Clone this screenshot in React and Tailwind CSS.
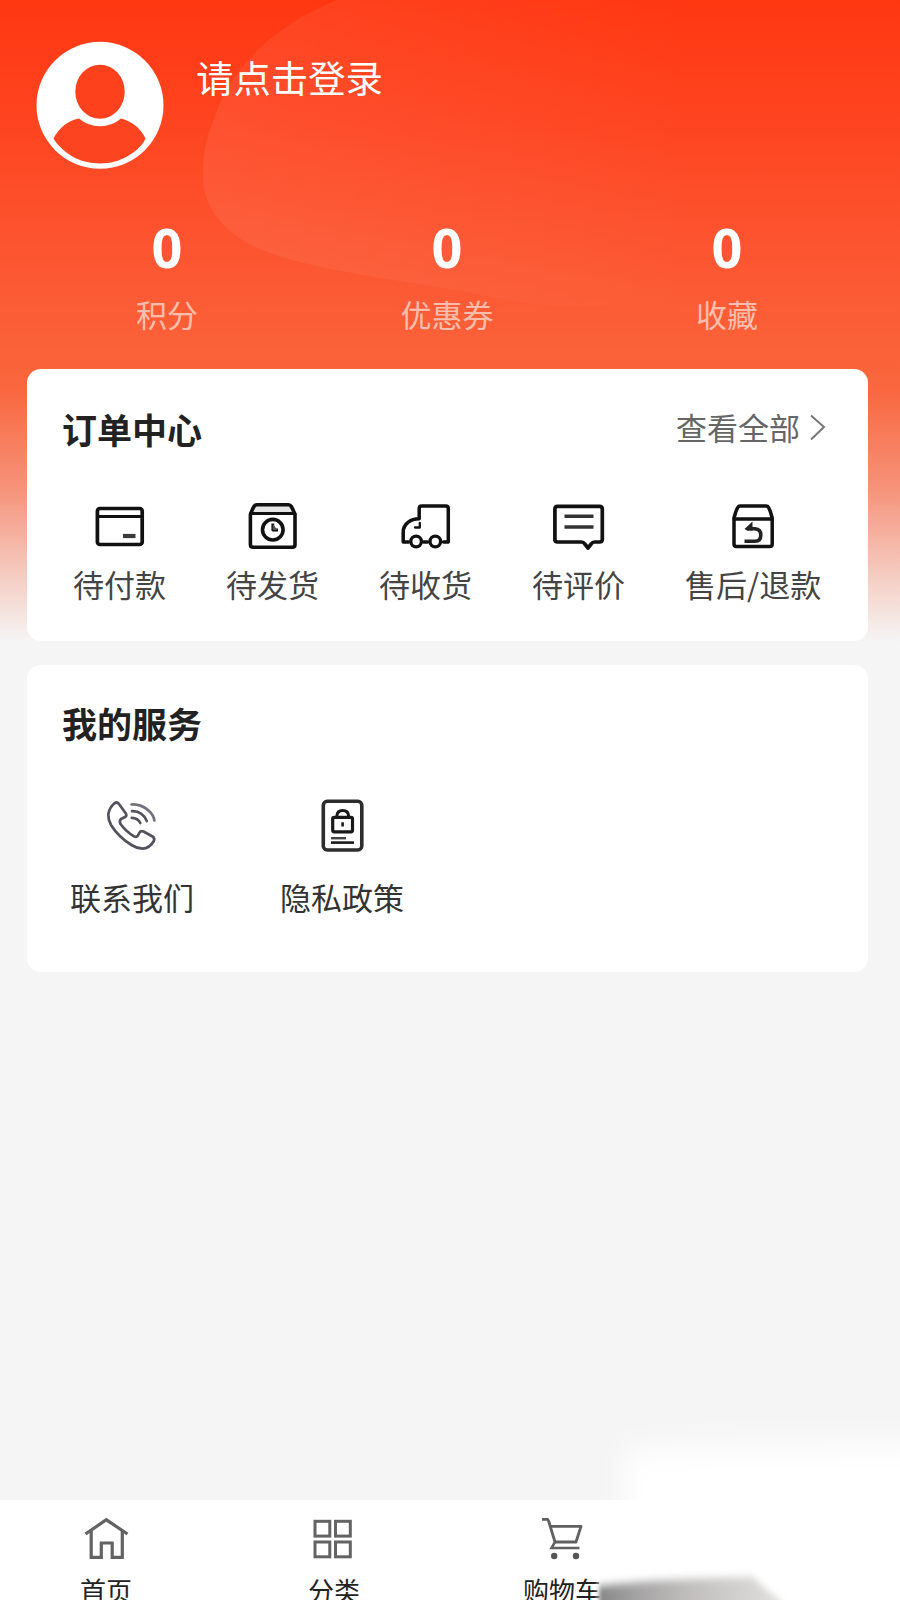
const line = { fill: 'none', stroke: 'currentColor', strokeLinejoin: 'round', strokeLinecap: 'round' };

const Avatar = () => (
  <svg className="block h-[128px] w-[128px] shrink-0" viewBox="36 41 128 128">
    <circle cx="100" cy="105.300" r="63.5" fill="#fff" />
    <ellipse cx="100" cy="91.7" rx="24.7" ry="27" fill="#fe411d" />
    <path d="M53.500 138.500Q62 122 79 118.500Q88 126.300 100 126.300Q112 126.300 121 118.500Q138 123 145.500 138.500Q143 145 134 152Q119 163.500 100 163.500Q81 163.500 67 153Q57 145 53.500 138.500Z" fill="#fd4420" />
  </svg>
);

const Card = () => (
  <svg className="block h-[60px] w-[60px]" viewBox="89.5 496 60 60">
    <g {...line} strokeWidth="3.700">
      <rect x="96.900" y="508.500" width="44.800" height="36" rx="2.500" />
      <path d="M97 516.500H141.500" strokeLinecap="butt" strokeWidth="3.200" />
      <path d="M122.500 536H135" stroke="#3a3a3a" strokeLinecap="butt" strokeWidth="4.200" />
    </g>
  </svg>
);

const ClockBox = () => (
  <svg className="block h-[60px] w-[60px]" viewBox="242.5 496 60 60">
    <path d="M253 505H291L294 512H250Z" fill="#e5e5e5" />
    <g {...line} strokeWidth="3.600">
      <path d="M249.900 514.500V544.500Q249.900 547.300 252.700 547.300H291.700Q294.500 547.300 294.500 544.500V514.500Q292.500 509.500 290.800 506.500Q289.800 504.800 288 504.800H256.500Q254.700 504.800 253.500 506.500Q251.500 510 249.900 514.500Z" />
      <path d="M250 513.500H294.500" strokeWidth="3" />
      <circle cx="272.300" cy="529.700" r="10.300" />
      <path d="M272.300 523.500V530H277.500" strokeWidth="2.800" strokeLinecap="butt" />
    </g>
    <path d="M272.300 524L277 530H272.300Z" fill="#555" />
  </svg>
);

const Truck = () => (
  <svg className="block h-[60px] w-[60px]" viewBox="395.5 496 60 60">
    <g {...line} strokeWidth="3.500">
      <path d="M408 542H402.700V532Q402.700 526 408 522Q412 518.700 418.700 518.700V508.500Q418.700 506 421.200 506H445.300Q447.800 506 447.800 508.500V542H443" />
      <path d="M423 542H427" />
      <path d="M419.300 523V527.500H414.500" strokeWidth="2.300" />
      <circle cx="415.600" cy="541.500" r="5.300" strokeWidth="3.300" />
      <circle cx="434.800" cy="541.500" r="5.300" strokeWidth="3.300" />
    </g>
  </svg>
);

const Comment = () => (
  <svg className="block h-[60px] w-[60px]" viewBox="548.5 496 60 60">
    <g {...line} strokeWidth="3.700">
      <path d="M557 506.300H599Q601.800 506.300 601.800 509V539.300Q601.800 542 599 542H594Q592 542 590.700 544L587.500 548L584.300 544Q583 542 581 542H557Q554.400 542 554.400 539.300V509Q554.400 506.300 557 506.300Z" />
      <path d="M564 516.300H593M564 527H593" stroke="#333" strokeWidth="3.500" strokeLinecap="butt" />
    </g>
  </svg>
);

const RefundBox = () => (
  <svg className="block h-[60px] w-[60px]" viewBox="723 496 60 60">
    <g {...line} strokeWidth="3.500">
      <path d="M734 518V544Q734 546.600 736.600 546.600H769.600Q772.200 546.600 772.200 544V518Q770.500 511 768.600 507.500Q767.800 506 766 506H740.200Q738.500 506 737.700 507.500Q735.700 511 734 518Z" />
      <path d="M734 519H772" strokeWidth="3.300" />
      <path d="M747 528.800H755Q760.800 529.200 760.800 535Q760.800 541.300 755 541.300H744.500" stroke="#222" strokeWidth="3.600" strokeLinecap="butt" />
    </g>
    <path d="M744.500 529L752.500 521.500V530.500H747Z" fill="#222" />
  </svg>
);

const Phone = () => (
  <svg className="block h-[60px] w-[60px]" viewBox="102 796 60 60" color="#55525f">
    <g {...line} strokeWidth="2.700">
      <path d="M114.500 803.300Q117 801.500 118.800 803.800L125.700 813.300Q127.300 815.600 125 817L121 819Q119 821 120.500 824Q126.500 832 134 836.300Q136.500 837.700 138 835.500L139.300 832.800Q140.700 830.300 143.500 831.500L152.500 836.500Q155.300 838.300 153.700 841.300Q149.500 848.500 142.500 848.700Q137 848.500 131.500 845Q118.500 837 111 825Q108 819.500 108.300 814Q109.500 807.500 114.500 803.300Z" />
      <path d="M131.800 817.800Q138 818 140.300 823" />
      <path d="M132 811.200Q142 810.700 146.800 821" />
      <path d="M131.500 804.500Q141 804 148.500 810.500Q154 815.500 154.300 820.500" stroke="#72707a" />
    </g>
  </svg>
);

const Privacy = () => (
  <svg className="block h-[60px] w-[60px]" viewBox="312 796 60 60" color="#191919">
    <g {...line} strokeWidth="3.600">
      <rect x="323.300" y="801.300" width="38.500" height="48.700" rx="4" stroke="#2d2d2d" />
      <rect x="332.700" y="817.300" width="19.800" height="14.500" rx="1.500" strokeWidth="3.200" />
      <path d="M336.800 816.500Q337 810.500 342.700 810.500Q348.500 810.500 348.700 816.500" strokeWidth="3" />
      <path d="M342.600 822.300V826.500" strokeWidth="2.600" strokeLinecap="butt" />
      <path d="M331 838.200H346" strokeWidth="2.400" strokeLinecap="butt" stroke="#444" />
      <path d="M331 842.600H354" strokeWidth="2.600" strokeLinecap="butt" />
    </g>
  </svg>
);

const Home = () => (
  <svg className="block h-[48px] w-[48px] shrink-0" viewBox="82 1515 48 48" fill="none" stroke="#636363" strokeWidth="3.200">
    <path d="M85.500 1534L106.300 1519.800L127.500 1534" />
    <path d="M91.200 1531V1557.300H101.300V1543H112.200V1557.300H122.300V1531" />
  </svg>
);

const Grid = () => (
  <svg className="block h-[48px] w-[48px] shrink-0" viewBox="310 1515 48 48" fill="none" stroke="#636363" strokeWidth="3">
    <rect x="315" y="1521.300" width="14.800" height="14.800" />
    <rect x="335.500" y="1521.300" width="14.800" height="14.800" />
    <rect x="315" y="1542" width="14.800" height="14.800" />
    <rect x="335.500" y="1542" width="14.800" height="14.800" />
  </svg>
);

const Cart = () => (
  <svg className="block h-[48px] w-[48px] shrink-0" viewBox="538 1515 48 48" fill="none" stroke="#606060" strokeWidth="2.800">
    <path d="M542 1519.300H547.500Q549 1521 549.500 1524L555 1542H576L581 1526.300H550.500" strokeLinejoin="round" />
    <path d="M555 1542L551.500 1548H579.500" strokeWidth="2.500" />
    <circle cx="554.200" cy="1556" r="3.200" fill="#555" stroke="none" />
    <circle cx="576" cy="1556" r="3.200" fill="#555" stroke="none" />
  </svg>
);

const stats = ['积分', '优惠券', '收藏'];

const orders = [
  { label: '待付款', Icon: Card },
  { label: '待发货', Icon: ClockBox },
  { label: '待收货', Icon: Truck },
  { label: '待评价', Icon: Comment },
  { label: '售后/退款', Icon: RefundBox },
];

const services = [
  { label: '联系我们', Icon: Phone },
  { label: '隐私政策', Icon: Privacy },
];

const tabs = [
  { label: '首页', Icon: Home },
  { label: '分类', Icon: Grid },
  { label: '购物车', Icon: Cart },
];

const HeaderArt = () => (
  <svg className="absolute left-0 top-0 h-[400px] w-[900px]" viewBox="0 0 900 400">
    <defs>
      <linearGradient id="swirl" x1="0" y1="0" x2="1" y2="0">
        <stop offset="0" stopColor="#fff" stopOpacity="0.07" />
        <stop offset="0.35" stopColor="#fff" stopOpacity="0.035" />
        <stop offset="0.7" stopColor="#fff" stopOpacity="0" />
      </linearGradient>
    </defs>
    <path d="M337 0C300 15 272 35 253 55C236 73 224 92 217 110C208 133 203 150 203 172C203 190 206 202 217 217C228 232 246 244 270 253C318 270 390 279 450 289C490 296 525 306 570 306H900V0Z" fill="url(#swirl)" />
  </svg>
);

const CornerHaze = () => (
  <svg className="pointer-events-none absolute bottom-0 right-0 h-[220px] w-[340px]" viewBox="560 1380 340 220">
    <defs>
      <filter id="soft" x="-30%" y="-60%" width="160%" height="220%">
        <feGaussianBlur stdDeviation="13 15" />
      </filter>
      <filter id="edge" x="-10%" y="-50%" width="120%" height="200%">
        <feGaussianBlur stdDeviation="2 4.500" />
      </filter>
      <linearGradient id="veil" x1="594" y1="0" x2="606" y2="0" gradientUnits="userSpaceOnUse">
        <stop offset="0" stopColor="#fff" stopOpacity="0" />
        <stop offset="1" stopColor="#fff" />
      </linearGradient>
      <linearGradient id="shade" x1="597" y1="0" x2="780" y2="0" gradientUnits="userSpaceOnUse">
        <stop offset="0" stopColor="#858585" />
        <stop offset="0.2" stopColor="#a3a2a2" />
        <stop offset="0.5" stopColor="#c0bebd" />
        <stop offset="1" stopColor="#e0dfde" />
      </linearGradient>
    </defs>
    <path d="M624 1450L700 1446L960 1443V1660H624Z" fill="#fff" filter="url(#soft)" />
    <rect x="594" y="1500" width="306" height="100" fill="url(#veil)" />
    <path d="M599 1586Q640 1581 690 1579L752 1577L784 1604V1625H599Z" fill="url(#shade)" filter="url(#edge)" />
  </svg>
);

export default function App() {
  return (
    <div className="relative flex h-[1600px] w-[900px] flex-col overflow-hidden bg-[#f5f5f5] bg-[linear-gradient(180deg,#ff3711_0px,#fe4521_130px,#fc5530_250px,#fa643b_370px,#f96941_395px,#f6937b_490px,#f5c9bd_570px,#f5f5f5_642px)] font-['Noto_Sans_CJK_SC',sans-serif]">
      <HeaderArt />
      <header className="relative h-[369px] px-[27px] pt-[41px]">
        <div className="flex h-[128px] pl-[9px]">
          <Avatar />
          <div className="ml-[32px] mt-[9px] h-[54px] text-[37.400px] leading-[54px] text-white">请点击登录</div>
        </div>
        <div className="mt-[48px] flex w-[840px]">
          {stats.map((label) => (
            <div key={label} className="flex w-[280px] flex-col items-center">
              <div className="font-['Open_Sans',sans-serif] text-[54px] font-bold leading-[60px] text-white">0</div>
              <div className="mt-[14px] text-[31px] leading-[46px] text-white/60">{label}</div>
            </div>
          ))}
        </div>
      </header>

      <section className="relative ml-[27px] h-[272px] w-[841px] rounded-[14px] bg-white">
        <div className="flex h-[86px] items-start justify-between pl-[35px] pr-[42px] pt-[35px]">
          <h2 className="text-[35px] font-bold leading-[50px] text-[#222]">订单中心</h2>
          <div className="-mt-[2px] flex items-center text-[31px] leading-[50px] text-[#666]">
            查看全部
            <svg className="ml-[10px] block h-[27px] w-[16px]" viewBox="0 0 16 27" fill="none" stroke="#777" strokeWidth="2">
              <path d="M1 1.500L14 13L1 25.500" />
            </svg>
          </div>
        </div>
        <div className="ml-[46px] mt-[41px] flex gap-[60px]">
          {orders.map(({ label, Icon }) => (
            <div key={label} className="flex flex-col items-center text-[#111]">
              <Icon />
              <div className="mt-[5px] whitespace-nowrap text-[31px] leading-[46px] text-[#444]">{label}</div>
            </div>
          ))}
        </div>
      </section>

      <section className="relative ml-[27px] mt-[24px] h-[307px] w-[841px] rounded-[14px] bg-white">
        <h2 className="pl-[35px] pt-[33px] text-[35px] font-bold leading-[50px] text-[#222]">我的服务</h2>
        <div className="mt-[48px] flex">
          {services.map(({ label, Icon }) => (
            <div key={label} className="flex w-[210px] flex-col items-center">
              <Icon />
              <div className="mt-[18px] text-[31px] leading-[46px] text-[#333]">{label}</div>
            </div>
          ))}
        </div>
      </section>

      <nav className="relative mt-auto flex h-[100px] bg-white">
        <div className="-ml-[8px] flex">
          {tabs.map(({ label, Icon }) => (
            <div key={label} className="flex w-[228px] flex-col items-center pt-[15px]">
              <Icon />
              <div className="mt-[8px] text-[26px] leading-[38px] text-[#222]">{label}</div>
            </div>
          ))}
        </div>
      </nav>
      <CornerHaze />
    </div>
  );
}
